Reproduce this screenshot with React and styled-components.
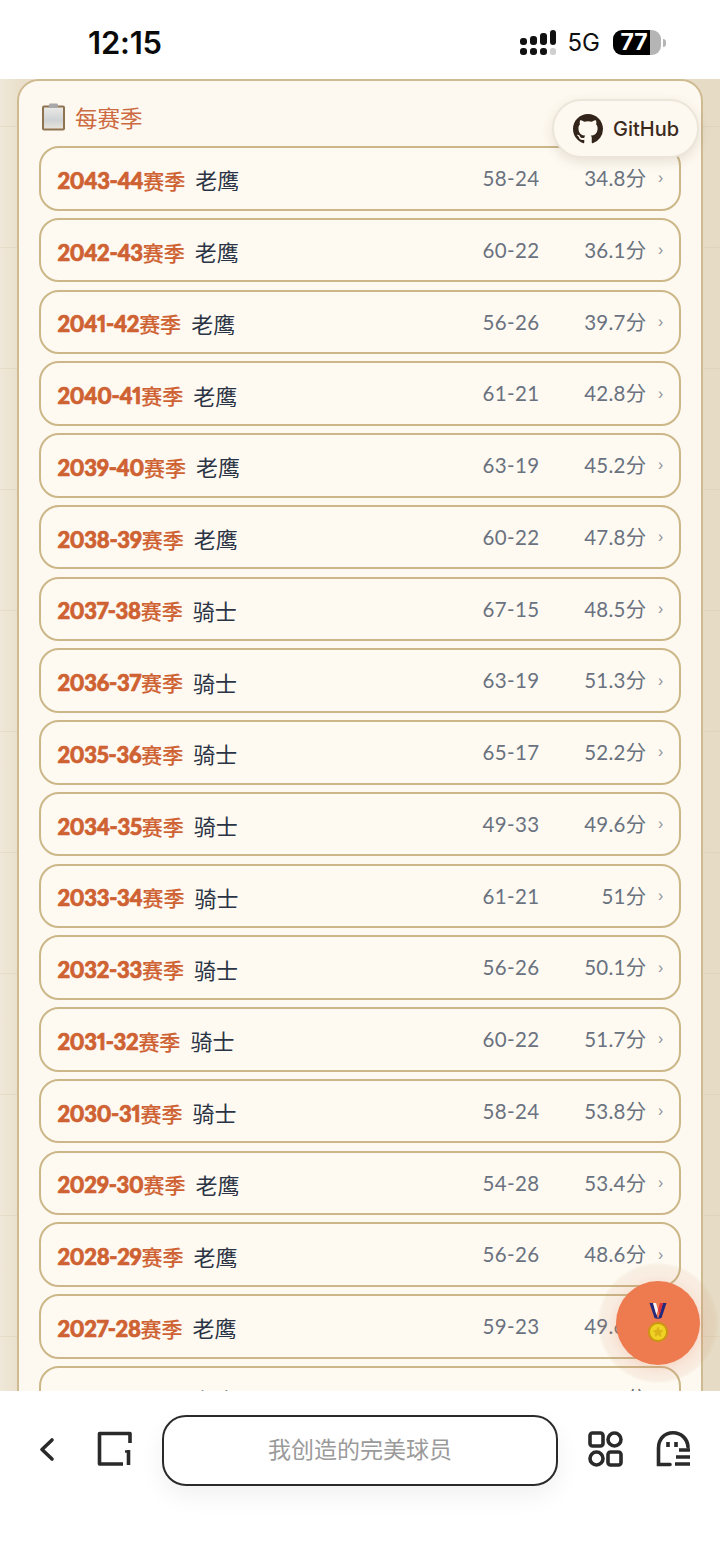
import React from "react";
import styled, { createGlobalStyle } from "styled-components";

const Global = createGlobalStyle`
  html, body { margin: 0; padding: 0; background: #fff; }
  #root { width: 720px; height: 1558px; }
`;
const sans = `"Noto Sans CJK SC", "Noto Sans", sans-serif`;
const Phone = styled.div`
  position: relative; width: 720px; height: 1558px; display: flex; flex-direction: column;
  overflow: hidden; background: #fff; font-family: ${sans};
`;
const StatusBar = styled.header`
  height: 79px; flex: none; display: flex; align-items: center; justify-content: space-between;
  padding: 6px 54px 0 88px; box-sizing: border-box; background: #fff;
`;
const Clock = styled.span`
  font: 600 31px/1 "Inter", sans-serif; letter-spacing: -0.2px; color: #0a0a0a;
`;
const StatusRight = styled.div`display: flex; align-items: center; gap: 13px;`;
const SignalSlot = styled.div`display: flex; margin-right: -2px;`;
const NetLabel = styled.span`font: 400 24px/1 "Inter", sans-serif; color: #111;`;
const BatteryGroup = styled.div`display: flex; align-items: center;`;
const Battery = styled.div`
  width: 48px; height: 25px; border-radius: 9px;
  background: linear-gradient(90deg, #000 0 77%, #b5b5b5 77%);
  color: #fff; font: 700 23px/25px "Inter", sans-serif; text-align: center; padding-right: 6px; box-sizing: border-box;
`;
const BatteryCap = styled.i`
  display: block; width: 3px; height: 8px; margin-left: 2px; border-radius: 0 3px 3px 0; background: #b5b5b5;
`;
const Viewport = styled.main`
  flex: 1; min-height: 0; overflow: hidden; padding: 0 17px;
  background-color: #e9dfca;
  background-image:
    linear-gradient(rgba(190,170,130,.16) 1px, transparent 1px),
    linear-gradient(90deg, #efe7d8 0, #e9dfca 3%, #e6dcc5 100%);
  background-size: 100% 121px, 100% 100%;
  background-position: 0 47px, 0 0;
`;
const Panel = styled.section`
  background: #fef9f0; border: 2.5px solid #cfbb92; border-radius: 22px;
  padding: 17px 20px 0 20px; box-sizing: border-box; height: 1400px;
`;
const Heading = styled.h2`
  margin: 0 0 10px; height: 38px; display: flex; align-items: center; gap: 8px;
  font: 400 22.5px/1 ${sans}; color: #cc6a42;
`;
const ClipSlot = styled.span`display: flex; margin-left: 2px;`;
const Rows = styled.div`display: flex; flex-direction: column; gap: 7.25px;`;
const Row = styled.div`
  height: 64.5px; box-sizing: border-box; border: 2.5px solid #cbb788; border-radius: 20px;
  background: #fefaf2; display: flex; align-items: center; padding: 0 15.5px 0 16.5px;
`;
const Season = styled.span`
  font: 500 21px/1 "Noto Sans CJK SC", sans-serif; color: #cf6232; white-space: nowrap;
  margin-top: 5px; -webkit-text-stroke: 0.2px #cf6232;
`;
const SeasonYears = styled.span`
  font-family: "Lato", sans-serif; font-weight: 900; font-size: 22px; letter-spacing: -0.3px;
  font-variant-numeric: proportional-nums; -webkit-text-stroke: 0.7px #cf6232;
`;
const Team = styled.span`
  font: 400 22px/1 ${sans}; color: #2b3444; margin-left: 10px; margin-top: 2px; white-space: nowrap;
`;
const Record = styled.span`
  margin-left: auto; width: 57px; text-align: right; font: 400 20.5px/1 "Lato", sans-serif; letter-spacing: 0.35px;
  font-variant-numeric: tabular-nums; color: #6a7280; white-space: nowrap;
`;
const Score = styled.span`
  width: 107px; text-align: right; font: 400 20.5px/1 "Lato", ${sans}; letter-spacing: 0.25px;
  color: #6a7280; white-space: nowrap;
`;
const Chevron = styled.span`
  width: 17px; text-align: right; font: 400 14px/1 "Inter", sans-serif; color: #8a8f98;
`;
const GitHubButton = styled.div`
  position: absolute; left: 552px; top: 99px; width: 147px; height: 59px; box-sizing: border-box;
  border: 2px solid #ece6da; border-radius: 30px; background: #fdf9f1;
  box-shadow: 0 4px 12px rgba(90,70,40,.14);
  display: flex; align-items: center; gap: 10px; padding-left: 19px;
  font: 500 20px/1 "Inter", sans-serif; color: #3b2a1c;
`;
const MedalButton = styled.div`
  position: absolute; left: 616px; top: 1281px; width: 84px; height: 84px; border-radius: 50%;
  background: #ee7a50; display: flex; align-items: center; justify-content: center;
  box-shadow: 0 0 0 16px rgba(238,122,80,.035), 0 0 0 18px rgba(200,150,110,.07), 0 3px 14px rgba(238,122,80,.22);
`;
const BottomBar = styled.footer`
  position: relative; height: 167px; flex: none; background: #fff; display: flex; align-items: flex-start; padding-top: 24px; box-sizing: border-box;
`;
const IconSlot = styled.div`
  position: absolute; top: 40px; left: ${p => p.$x}px; width: 36px; height: 36px;
`;
const AddressBar = styled.div`
  margin-left: 162px; width: 396px; height: 71px; box-sizing: border-box; border: 2px solid #2a2a2a; border-radius: 24px;
  background: #fff; display: flex; align-items: center; justify-content: center; padding-bottom: 4px;
  font: 400 23px/1 ${sans}; color: #9a9a9a; box-shadow: 0 10px 24px rgba(0,0,0,.06);
`;

const rows = [
  ["2043-44", "老鹰", "58-24", "34.8分"], ["2042-43", "老鹰", "60-22", "36.1分"],
  ["2041-42", "老鹰", "56-26", "39.7分"], ["2040-41", "老鹰", "61-21", "42.8分"],
  ["2039-40", "老鹰", "63-19", "45.2分"], ["2038-39", "老鹰", "60-22", "47.8分"],
  ["2037-38", "骑士", "67-15", "48.5分"], ["2036-37", "骑士", "63-19", "51.3分"],
  ["2035-36", "骑士", "65-17", "52.2分"], ["2034-35", "骑士", "49-33", "49.6分"],
  ["2033-34", "骑士", "61-21", "51分"], ["2032-33", "骑士", "56-26", "50.1分"],
  ["2031-32", "骑士", "60-22", "51.7分"], ["2030-31", "骑士", "58-24", "53.8分"],
  ["2029-30", "老鹰", "54-28", "53.4分"], ["2028-29", "老鹰", "56-26", "48.6分"],
  ["2027-28", "老鹰", "59-23", "49.6分"], ["2026-27", "老鹰", "50-32", "44分"],
];

const Signal = () => (
  <svg width="37" height="26" viewBox="0 0 37 26">
    <g fill="#111">
      <rect x="0" y="8" width="7" height="7" rx="3" /><rect x="0" y="18" width="7" height="7" rx="3" />
      <rect x="10" y="6" width="7" height="9" rx="3" /><rect x="10" y="18" width="7" height="7" rx="3" />
      <rect x="20" y="3" width="7" height="12" rx="3" /><rect x="20" y="18" width="7" height="7" rx="3" />
      <rect x="30" y="0" width="6" height="15" rx="3" />
    </g>
    <rect x="30" y="18" width="6" height="7" rx="2.5" fill="#cfcfcf" />
  </svg>
);
const Clipboard = () => (
  <svg width="26" height="28" viewBox="0 0 26 28">
    <defs>
      <linearGradient id="sheet" x1="0" y1="0" x2="0" y2="1">
        <stop offset="0" stopColor="#e9e9e6" /><stop offset=".6" stopColor="#cfd2d4" /><stop offset="1" stopColor="#e6e3da" />
      </linearGradient>
    </defs>
    <rect x="1" y="2.5" width="23" height="25" rx="2" fill="#8f7250" />
    <rect x="3" y="4.5" width="19" height="21" fill="url(#sheet)" />
    <rect x="8" y="0.5" width="9" height="4.5" rx="1.2" fill="#a8a8a8" />
  </svg>
);
const GitHub = () => (
  <svg width="30" height="30" viewBox="0 0 16 16">
    <path fill="#33241a" d="M8 0C3.58 0 0 3.58 0 8c0 3.54 2.29 6.53 5.47 7.59.4.07.55-.17.55-.38 0-.19-.01-.82-.01-1.49-2.01.37-2.53-.49-2.69-.94-.09-.23-.48-.94-.82-1.13-.28-.15-.68-.52-.01-.53.63-.01 1.08.58 1.23.82.72 1.21 1.87.87 2.33.66.07-.52.28-.87.51-1.07-1.78-.2-3.64-.89-3.64-3.95 0-.87.31-1.59.82-2.15-.08-.2-.36-1.02.08-2.12 0 0 .67-.21 2.2.82.64-.18 1.32-.27 2-.27s1.36.09 2 .27c1.53-1.04 2.2-.82 2.2-.82.44 1.1.16 1.92.08 2.12.51.56.82 1.27.82 2.15 0 3.07-1.87 3.75-3.65 3.95.29.25.54.73.54 1.48 0 1.07-.01 1.93-.01 2.2 0 .21.15.46.55.38A8.01 8.01 0 0 0 16 8c0-4.42-3.58-8-8-8z" />
  </svg>
);
const Medal = () => (
  <svg width="24" height="42" viewBox="0 0 24 42">
    <path d="M3.5 1h3.5l5 16-3.5-1z" fill="#232a7c" />
    <path d="M20.5 1h-3.5l-5 16 3.5-1z" fill="#232a7c" />
    <path d="M7 1h3l2 7-1.6 5z" fill="#f4f4f4" />
    <path d="M17 1h-3l-2 7 1.6 5z" fill="#d8333b" />
    <circle cx="12" cy="30" r="10" fill="#c9980d" />
    <circle cx="12" cy="30" r="8" fill="#f0d225" />
    <path d="M12 24.5l1.7 3.5 3.8.5-2.8 2.6.7 3.8-3.4-1.9-3.4 1.9.7-3.8-2.8-2.6 3.8-.5z" fill="#dcb41a" />
  </svg>
);
const ink = { fill: "none", stroke: "#2a2a2a", strokeWidth: 3.6 };
const Back = () => (
  <svg width="36" height="36" viewBox="0 0 36 36"><path {...ink} strokeLinecap="round" strokeLinejoin="round" d="M22 9l-10 9.5L22 28" /></svg>
);
const Tabs = () => (
  <svg width="36" height="36" viewBox="0 0 36 36">
    <path {...ink} strokeLinejoin="round" d="M33 12V2.5H2.5V33H26" />
    <path {...ink} d="M31.5 19v15" />
    <path {...ink} strokeWidth="2.4" d="M28 20.5h3.5" />
  </svg>
);
const Grid = () => (
  <svg width="36" height="36" viewBox="0 0 36 36">
    <rect {...ink} x="2" y="2" width="13" height="13" rx="2.5" />
    <circle {...ink} cx="26.5" cy="8.5" r="6.5" />
    <circle {...ink} cx="8.5" cy="27.5" r="6.5" />
    <rect {...ink} x="20" y="21" width="13" height="13" rx="2.5" />
  </svg>
);
const Ghost = () => (
  <svg width="36" height="36" viewBox="0 0 36 36">
    <path {...ink} strokeLinecap="round" d="M14 33.5H2.5V17C2.5 8 8.5 1.8 17 1.8S31.5 8 32 16" />
    <path {...ink} d="M12 11v5M20 11v5M23 19h11M20 26h14M19 33h15" />
  </svg>
);

export default function App() {
  return (
    <Phone>
      <Global />
      <StatusBar>
        <Clock>12:15</Clock>
        <StatusRight>
          <SignalSlot><Signal /></SignalSlot>
          <NetLabel>5G</NetLabel>
          <BatteryGroup>
            <Battery>77</Battery>
            <BatteryCap />
          </BatteryGroup>
        </StatusRight>
      </StatusBar>
      <Viewport>
        <Panel>
          <Heading><ClipSlot><Clipboard /></ClipSlot>每赛季</Heading>
          <Rows>
            {rows.map(([y, team, rec, pts]) => (
              <Row key={y}>
                <Season><SeasonYears>{y}</SeasonYears>赛季</Season>
                <Team>{team}</Team>
                <Record>{rec}</Record>
                <Score>{pts}</Score>
                <Chevron>›</Chevron>
              </Row>
            ))}
          </Rows>
        </Panel>
      </Viewport>
      <BottomBar>
        <IconSlot $x={30}><Back /></IconSlot>
        <IconSlot $x={97}><Tabs /></IconSlot>
        <AddressBar>我创造的完美球员</AddressBar>
        <IconSlot $x={588}><Grid /></IconSlot>
        <IconSlot $x={656}><Ghost /></IconSlot>
      </BottomBar>
      <GitHubButton><GitHub />GitHub</GitHubButton>
      <MedalButton><Medal /></MedalButton>
    </Phone>
  );
}
